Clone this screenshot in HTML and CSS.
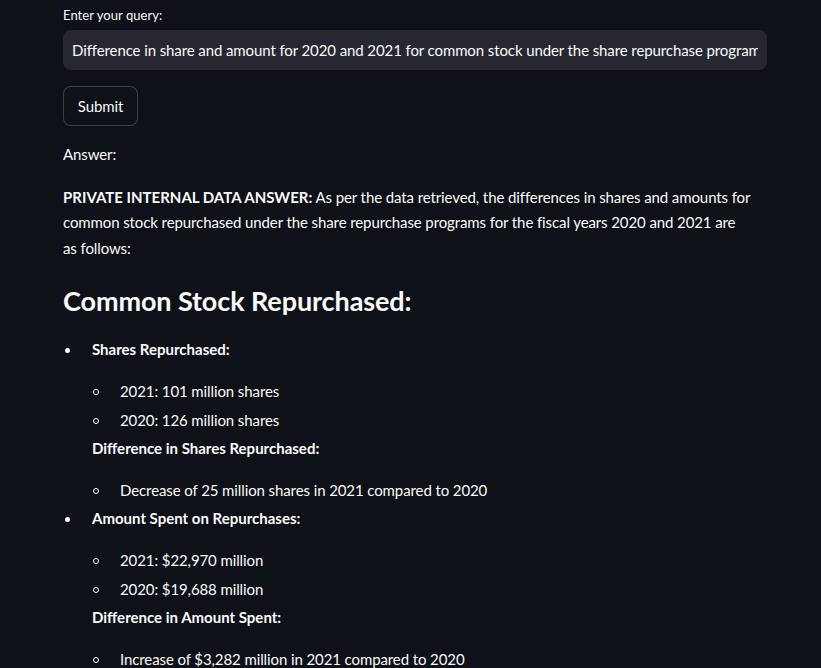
FILE: index.html
```html
<!DOCTYPE html>
<html lang="en">
<head>
<meta charset="utf-8">
<link rel="stylesheet" href="styles.css">
</head>
<body>
<main class="main">
  <label class="label" for="q">Enter your query:</label>
  <div class="input-wrap">
    <input id="q" class="input" type="text" value="Difference in share and amount for 2020 and 2021 for common stock under the share repurchase programs">
  </div>
  <button class="btn">Submit</button>
  <p class="p answer">Answer:</p>
  <div class="md">
    <p class="p intro"><strong>PRIVATE INTERNAL DATA ANSWER:</strong> As per the data retrieved, the differences in shares and amounts for common stock repurchased under the share repurchase programs for the fiscal years 2020 and 2021 are as&nbsp;follows:</p>
    <h3 class="h3">Common Stock Repurchased:</h3>
    <ul class="ul">
      <li class="li">
        <p class="lp"><strong>Shares Repurchased:</strong></p>
        <ul class="sub">
          <li class="sli"><span>2021: 101 million shares</span></li>
          <li class="sli"><span>2020: 126 million shares</span></li>
        </ul>
        <p class="lp"><strong>Difference in Shares Repurchased:</strong></p>
        <ul class="sub">
          <li class="sli"><span>Decrease of 25 million shares in 2021 compared to 2020</span></li>
        </ul>
      </li>
      <li class="li">
        <p class="lp"><strong>Amount Spent on Repurchases:</strong></p>
        <ul class="sub">
          <li class="sli"><span>2021: $22,970 million</span></li>
          <li class="sli"><span>2020: $19,688 million</span></li>
        </ul>
        <p class="lp"><strong>Difference in Amount Spent:</strong></p>
        <ul class="sub">
          <li class="sli"><span>Increase of $3,282 million in 2021 compared to 2020</span></li>
        </ul>
      </li>
    </ul>
  </div>
</main>
</body>
</html>
```
FILE: styles.css
```css
html, body {
  margin: 0;
  padding: 0;
  background: #0e1117;
  color: #fafafa;
  font-family: Lato, "Source Sans Pro", "Noto Sans", sans-serif;
  font-size: 15px;
  letter-spacing: -0.1px;
}
.main {
  width: 704px;
  padding: 5px 0 0 63px;
  display: flex;
  flex-direction: column;
  align-items: flex-start;
}
.label {
  font-size: 13px;
  letter-spacing: 0.05px;
  line-height: 20px;
  margin-bottom: 5px;
}
.input-wrap {
  width: 704px;
  height: 40px;
  background: #262730;
  border-radius: 8px;
  display: flex;
  align-items: center;
  box-sizing: border-box;
  padding: 0 9px;
}
.input {
  width: 100%;
  background: transparent;
  border: none;
  outline: none;
  color: #fafafa;
  font-family: inherit;
  font-size: 15px;
  letter-spacing: -0.1px;
  padding: 0;
}
.btn {
  margin-top: 16px;
  height: 40px;
  width: 75px;
  background: #0e1117;
  border: 1px solid rgba(250, 250, 250, 0.2);
  border-radius: 8px;
  color: #fafafa;
  font-family: inherit;
  font-size: 15px;
  letter-spacing: -0.1px;
  padding: 0;
}
.p {
  margin: 0 0 16px;
  line-height: 25.6px;
}
.answer {
  margin-top: 16px;
  margin-bottom: 17px;
}
.md {
  width: 704px;
}
.md strong {
  font-weight: 700;
  letter-spacing: 0;
}
.h3 {
  font-size: 27px;
  font-weight: 700;
  letter-spacing: -0.1px;
  line-height: 40px;
  margin: 20px 0 16px;
}
.ul, .sub {
  margin: 0;
  padding: 0;
  list-style: none;
}
.li {
  display: grid;
  grid-template-columns: 29px 1fr;
  line-height: 25.6px;
  margin: 3.2px 0;
}
.li > * {
  grid-column: 2;
}
.li::before {
  content: "";
  grid-column: 1;
  grid-row: 1;
  width: 5px;
  height: 5px;
  border-radius: 50%;
  background: #fafafa;
  margin: 11px 0 0 2px;
}
.sli {
  display: grid;
  grid-template-columns: 28px 1fr;
  line-height: 25.6px;
  margin: 3.2px 0 0;
}
.sli > span {
  grid-column: 2;
}
.sli::before {
  content: "";
  grid-column: 1;
  grid-row: 1;
  width: 4px;
  height: 4px;
  border: 1px solid #fafafa;
  border-radius: 50%;
  margin: 10px 0 0 1px;
}
.lp {
  margin: 0 0 12.6px;
}
.sub + .lp {
  margin-top: 3.2px;
}
```
